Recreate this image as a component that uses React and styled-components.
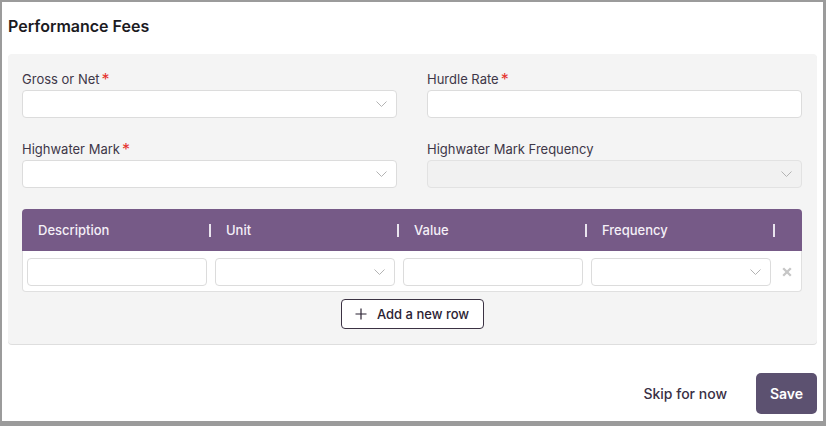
import React from "react";
import styled, { createGlobalStyle } from "styled-components";

const GlobalStyle = createGlobalStyle`
  * { box-sizing: border-box; }
  body {
    margin: 0;
    font-family: Inter, "Noto Sans", Arial, sans-serif;
    background: #ffffff;
  }
`;

const Chevron = () => (
  <svg width="11" height="6" viewBox="0 0 11 6" fill="none">
    <path d="M0.5 0.5 L5.5 5.5 L10.5 0.5" stroke="#b3b3b3" strokeWidth="1" />
  </svg>
);

const Cross = () => (
  <svg width="10" height="10" viewBox="0 0 10 10" fill="none">
    <path d="M1.2 1.2 L8.8 8.8 M8.8 1.2 L1.2 8.8" stroke="#c6c6c6" strokeWidth="2.3" />
  </svg>
);

const PlusIcon = () => (
  <svg width="12" height="12" viewBox="0 0 12 12" fill="none">
    <path d="M6 0.5 V11.5 M0.5 6 H11.5" stroke="#2b2233" strokeWidth="1.2" />
  </svg>
);

const fields = [
  { label: "Gross or Net", required: true, type: "select" },
  { label: "Hurdle Rate", required: true, type: "input" },
  { label: "Highwater Mark", required: true, type: "select" },
  { label: "Highwater Mark Frequency", required: false, type: "select", disabled: true },
];

const columns = [
  { title: "Description", type: "input" },
  { title: "Unit", type: "select" },
  { title: "Value", type: "input" },
  { title: "Frequency", type: "select" },
];

const App = () => {
  return (
    <Frame>
      <GlobalStyle />
      <Title>Performance Fees</Title>
      <Panel>
        <Fields>
          {fields.map((f) => (
            <Field key={f.label}>
              <Label>
                {f.label}
                {f.required && <Star>*</Star>}
              </Label>
              {f.type === "select" ? (
                <Select disabled={f.disabled}>
                  <Chevron />
                </Select>
              ) : (
                <TextBox />
              )}
            </Field>
          ))}
        </Fields>

        <Table>
          <HeaderRow>
            {columns.map((c) => (
              <HeadCell key={c.title}>
                {c.title}
                <Divider />
              </HeadCell>
            ))}
            <span />
          </HeaderRow>
          <BodyRow>
            {columns.map((c) =>
              c.type === "select" ? (
                <Select key={c.title}>
                  <Chevron />
                </Select>
              ) : (
                <TextBox key={c.title} />
              )
            )}
            <RemoveCell>
              <Cross />
            </RemoveCell>
          </BodyRow>
        </Table>

        <AddWrap>
          <AddButton>
            <PlusIcon />
            Add a new row
          </AddButton>
        </AddWrap>
      </Panel>

      <Footer>
        <SkipButton>Skip for now</SkipButton>
        <SaveButton>Save</SaveButton>
      </Footer>
    </Frame>
  );
};

export default App;

const Frame = styled.div`
  width: 826px;
  height: 426px;
  border: solid #9b9b9b;
  border-width: 2px 3px 5px 2px;
  padding: 0 6px;
  display: flex;
  flex-direction: column;
  overflow: hidden;
`;

const Title = styled.h2`
  margin: 0;
  padding-top: 14px;
  font-size: 16px;
  line-height: 20px;
  font-weight: 600;
  color: #1c1b1f;
`;

const Panel = styled.div`
  margin-top: 18px;
  background: #f4f4f4;
  border-radius: 4px;
  box-shadow: 0 1px 0 #dedede;
  padding: 16px 15px 15px 14px;
`;

const Fields = styled.div`
  display: grid;
  grid-template-columns: 1fr 1fr;
  column-gap: 30px;
  row-gap: 22px;
`;

const Field = styled.div`
  display: flex;
  flex-direction: column;
`;

const Label = styled.label`
  font-size: 13px;
  line-height: 18px;
  color: #3e3748;
  margin-bottom: 2px;
  display: flex;
  align-items: flex-start;
`;

const Star = styled.span`
  color: #e5322d;
  font-size: 16px;
  line-height: 18px;
  margin-left: 2px;
`;

const TextBox = styled.div`
  height: 28px;
  background: #ffffff;
  border: 1px solid #dcdcdc;
  border-radius: 4px;
`;

const Select = styled.div`
  height: 28px;
  background: ${(p) => (p.disabled ? "#f1f1f1" : "#ffffff")};
  border: 1px solid ${(p) => (p.disabled ? "#e2e2e2" : "#dcdcdc")};
  border-radius: 4px;
  display: flex;
  align-items: center;
  justify-content: flex-end;
  padding-right: 9px;
`;

const Table = styled.div`
  margin-top: 21px;
`;

const grid = `
  display: grid;
  grid-template-columns: repeat(4, 1fr) 16px;
  column-gap: 8px;
`;

const HeaderRow = styled.div`
  ${grid}
  height: 42px;
  align-items: center;
  background: #765a87;
  border-radius: 4px 4px 0 0;
  padding: 0 7px 0 5px;
`;

const HeadCell = styled.div`
  display: flex;
  align-items: center;
  justify-content: space-between;
  padding-left: 11px;
  margin-right: -4px;
  font-size: 13px;
  font-weight: 500;
  color: #f4eff7;
`;

const Divider = styled.span`
  width: 2px;
  height: 13px;
  background: #e9e4ee;
`;

const BodyRow = styled.div`
  ${grid}
  align-items: center;
  background: #ffffff;
  border: 1px solid #e0e0e0;
  border-top: none;
  border-radius: 0 0 4px 4px;
  padding: 7px 6px 5px 4px;
`;

const RemoveCell = styled.div`
  display: flex;
  justify-content: center;
  align-items: center;
`;

const AddWrap = styled.div`
  display: flex;
  justify-content: center;
  margin-top: 7px;
`;

const AddButton = styled.button`
  width: 143px;
  height: 30px;
  background: #ffffff;
  border: 1px solid #3b3243;
  border-radius: 4px;
  font-family: inherit;
  font-size: 13px;
  font-weight: 500;
  color: #2b2233;
  display: flex;
  align-items: center;
  justify-content: center;
  gap: 10px;
  padding: 0;
`;

const Footer = styled.div`
  margin-top: 29px;
  display: flex;
  justify-content: flex-end;
  align-items: center;
  gap: 29px;
`;

const SkipButton = styled.button`
  background: none;
  border: none;
  padding: 0;
  font-family: inherit;
  font-size: 14px;
  font-weight: 500;
  color: #3a3045;
`;

const SaveButton = styled.button`
  width: 61px;
  height: 41px;
  background: #5c5170;
  border: none;
  border-radius: 5px;
  font-family: inherit;
  font-size: 14px;
  font-weight: 600;
  color: #ffffff;
`;
